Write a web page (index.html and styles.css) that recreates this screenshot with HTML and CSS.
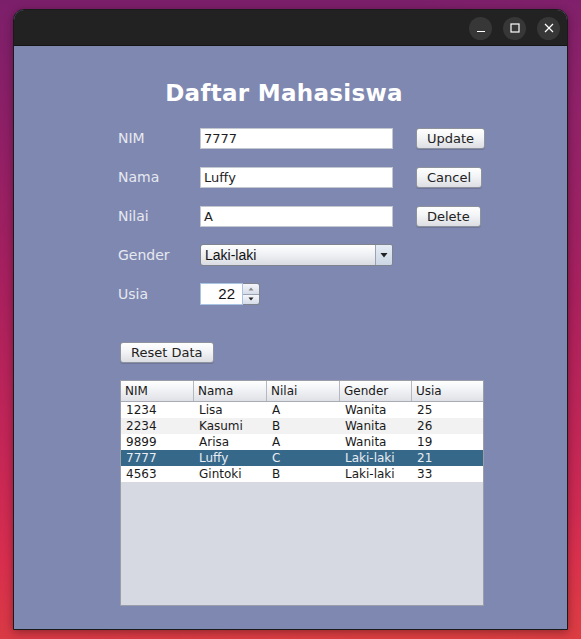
FILE: index.html
```html
<!DOCTYPE html>
<html>
<head>
<meta charset="utf-8">
<link rel="stylesheet" href="styles.css">
</head>
<body>
<div class="window">
  <div class="titlebar">
    <div class="tb-btn"><svg width="10" height="10" viewBox="0 0 10 10"><path d="M1 8.5h8" stroke="#fff" stroke-width="1.2"/></svg></div>
    <div class="tb-btn"><svg width="10" height="10" viewBox="0 0 10 10"><rect x="1" y="1" width="8" height="8" fill="none" stroke="#fff" stroke-width="1.2"/></svg></div>
    <div class="tb-btn"><svg width="10" height="10" viewBox="0 0 10 10"><path d="M1 1L9 9M9 1L1 9" stroke="#fff" stroke-width="1.2"/></svg></div>
  </div>
  <div class="content">
    <h1 class="title">Daftar Mahasiswa</h1>
    <div class="form">
      <div class="label">NIM</div>
      <div class="field">7777</div>
      <div class="btn">Update</div>

      <div class="label">Nama</div>
      <div class="field">Luffy</div>
      <div class="btn">Cancel</div>

      <div class="label">Nilai</div>
      <div class="field">A</div>
      <div class="btn">Delete</div>

      <div class="label">Gender</div>
      <div class="combo"><span class="combo-text">Laki-laki</span><span class="combo-arrow"><svg width="8" height="6" viewBox="0 0 8 6"><path d="M0.5 1h7L4 5.5z" fill="#222"/></svg></span></div>
      <div></div>

      <div class="label">Usia</div>
      <div class="spinner">
        <span class="spin-field">22</span>
        <span class="spin-btns">
          <span class="spin-up"><svg width="6" height="4" viewBox="0 0 6 4"><path d="M0.5 3.5h5L3 0.5z" fill="#888"/></svg></span>
          <span class="spin-down"><svg width="6" height="4" viewBox="0 0 6 4"><path d="M0.5 0.5h5L3 3.5z" fill="#222"/></svg></span>
        </span>
      </div>
      <div></div>
    </div>
    <div class="reset-row"><div class="btn reset">Reset Data</div></div>
    <div class="table">
      <div class="thead">
        <div class="th">NIM</div><div class="th">Nama</div><div class="th">Nilai</div><div class="th">Gender</div><div class="th last">Usia</div>
      </div>
      <div class="tr"><div>1234</div><div>Lisa</div><div>A</div><div>Wanita</div><div>25</div></div>
      <div class="tr alt"><div>2234</div><div>Kasumi</div><div>B</div><div>Wanita</div><div>26</div></div>
      <div class="tr"><div>9899</div><div>Arisa</div><div>A</div><div>Wanita</div><div>19</div></div>
      <div class="tr sel"><div>7777</div><div>Luffy</div><div>C</div><div>Laki-laki</div><div>21</div></div>
      <div class="tr"><div>4563</div><div>Gintoki</div><div>B</div><div>Laki-laki</div><div>33</div></div>
    </div>
  </div>
</div>
</body>
</html>
```

FILE: styles.css
```css
html, body {
  margin: 0;
  padding: 0;
}
body {
  width: 581px;
  height: 639px;
  overflow: hidden;
  font-family: "DejaVu Sans", sans-serif;
  background:
    radial-gradient(ellipse 420px 260px at 640px 120px, rgba(160,40,110,0.35), transparent 70%),
    radial-gradient(ellipse 500px 300px at 420px 700px, rgba(230,70,60,0.55), transparent 70%),
    linear-gradient(180deg, #7c1f6b 0%, #8e1f66 20%, #a8205e 45%, #c42656 70%, #d82e4e 88%, #d93a44 100%);
  padding-top: 9px;
  box-sizing: border-box;
}
.window {
  margin-left: 13px;
  width: 555px;
  height: 621px;
  box-sizing: border-box;
  border: 1px solid #1a1a1a;
  border-radius: 11px 11px 0 0;
  overflow: hidden;
  background: #7f88b1;
  box-shadow: 0 2px 10px rgba(0,0,0,0.35);
  display: flex;
  flex-direction: column;
}
.titlebar {
  height: 36px;
  flex: none;
  background: #222222;
  border-bottom: 1px solid #151515;
  display: flex;
  justify-content: flex-end;
  align-items: center;
  gap: 11px;
  padding-right: 7px;
  padding-top: 1px;
  box-sizing: border-box;
}
.tb-btn {
  width: 23px;
  height: 23px;
  border-radius: 50%;
  background: #373737;
  display: flex;
  align-items: center;
  justify-content: center;
}
.content {
  flex: 1;
  display: flex;
  flex-direction: column;
  padding-left: 104px;
}
.title {
  margin: 32px 0 0 0;
  width: 332px;
  text-align: center;
  font-size: 23px;
  line-height: 30px;
  font-weight: bold;
  color: #ffffff;
  letter-spacing: 0.3px;
}
.form {
  margin-top: 20px;
  display: grid;
  grid-template-columns: 82px 193px auto;
  grid-auto-rows: 21px;
  row-gap: 18px;
  column-gap: 0;
  align-items: start;
}
.label {
  color: #e6e8f0;
  font-size: 14px;
  line-height: 21px;
}
.field {
  height: 21px;
  box-sizing: border-box;
  background: #fff;
  border: 1px solid #c3c7d0;
  font-size: 13px;
  line-height: 19px;
  padding-left: 3px;
  color: #1e1e1e;
}
.btn {
  justify-self: start;
  margin-left: 23px;
  height: 21px;
  box-sizing: border-box;
  padding: 0 10px;
  border: 1px solid #8e929c;
  border-radius: 3px;
  background: linear-gradient(180deg, #ffffff 0%, #f3f4f6 45%, #dcdee3 100%);
  font-size: 13px;
  line-height: 19px;
  color: #222;
  box-shadow: 0 1px 0 rgba(60,66,90,0.25);
}
.combo {
  height: 22px;
  margin-top: -1px;
  box-sizing: border-box;
  border: 1px solid #7e838e;
  border-radius: 3px;
  background: linear-gradient(180deg, #ffffff 0%, #eef0f3 50%, #d9dce2 100%);
  display: flex;
  align-items: center;
  overflow: hidden;
}
.combo-text {
  flex: 1;
  font-size: 14px;
  padding-left: 4px;
  color: #111;
  font-family: "Liberation Sans", Arial, sans-serif;
}
.combo-arrow {
  width: 16px;
  height: 100%;
  border-left: 1px solid #9aa3b2;
  background: linear-gradient(180deg, #e6ecf4 0%, #ccd6e4 100%);
  display: flex;
  align-items: center;
  justify-content: center;
}
.spinner {
  width: 60px;
  height: 22px;
  margin-top: -1px;
  display: flex;
}
.spin-field {
  width: 43px;
  box-sizing: border-box;
  height: 22px;
  background: #fff;
  border: 1px solid #a9c3e2;
  text-align: right;
  padding-right: 7px;
  font-family: "Liberation Sans", Arial, sans-serif;
  font-size: 15px;
  line-height: 20px;
  color: #111;
}
.spin-btns {
  width: 17px;
  height: 22px;
  box-sizing: border-box;
  border: 1px solid #7e838e;
  border-left: none;
  border-radius: 0 3px 3px 0;
  display: flex;
  flex-direction: column;
  overflow: hidden;
}
.spin-up, .spin-down {
  flex: 1;
  display: flex;
  align-items: center;
  justify-content: center;
  background: linear-gradient(180deg, #f4f6fa 0%, #d6dde8 100%);
}
.spin-up { border-bottom: 1px solid #9aa3b2; }
.reset-row {
  margin-top: 37px;
  padding-left: 2px;
  display: flex;
}
.btn.reset {
  margin-left: 0;
  padding: 0 10px;
}
.table {
  margin-top: 17px;
  margin-left: 2px;
  width: 364px;
  height: 226px;
  box-sizing: border-box;
  border: 1px solid #9a9ea8;
  background: #d6d9e1;
  font-size: 12px;
  color: #1a1a1a;
}
.thead {
  display: grid;
  grid-template-columns: 73px 73px 73px 72px 1fr;
  height: 21px;
  background: linear-gradient(180deg, #ffffff 0%, #f0f1f4 50%, #dfe1e6 100%);
  border-bottom: 1px solid #a8acb5;
  box-sizing: border-box;
}
.th {
  padding-left: 4px;
  line-height: 20px;
  border-right: 1px solid #b5b8c0;
  font-size: 12px;
}
.th.last { border-right: none; }
.tr {
  display: grid;
  grid-template-columns: 73px 73px 73px 72px 1fr;
  height: 16px;
  line-height: 16px;
  background: #ffffff;
}
.tr > div { padding-left: 5px; }
.tr.alt { background: #f2f2f2; }
.tr.sel { background: #36688a; color: #e9eef3; }
```
